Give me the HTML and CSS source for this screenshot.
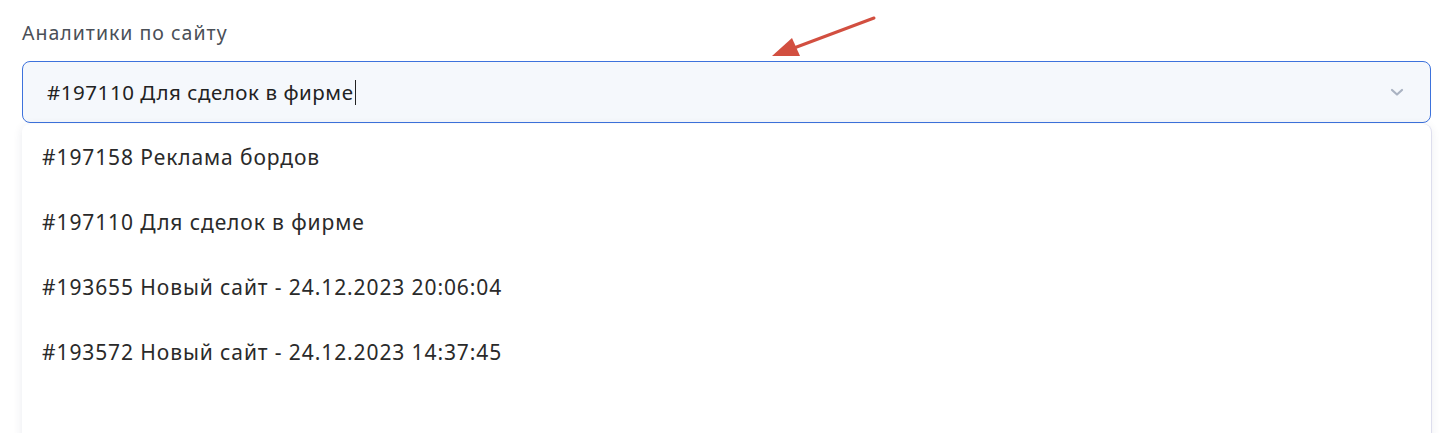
FILE: index.html
```html
<!DOCTYPE html>
<html lang="ru">
<head>
<meta charset="utf-8">
<link rel="stylesheet" href="styles.css">
</head>
<body>
<div class="field">
  <label class="label">Аналитики по сайту</label>
  <div class="select">
    <span class="value">#197110 Для сделок в фирме<span class="caret"></span></span>
    <svg class="chev" width="14" height="9" viewBox="0 0 14 9"><path d="M2 2 L7 6.5 L12 2" fill="none" stroke="#aab3c2" stroke-width="2.2" stroke-linecap="round" stroke-linejoin="round"/></svg>
  </div>
  <ul class="menu">
    <li class="item">#197158 Реклама бордов</li>
    <li class="item">#197110 Для сделок в фирме</li>
    <li class="item">#193655 Новый сайт - 24.12.2023 20:06:04</li>
    <li class="item">#193572 Новый сайт - 24.12.2023 14:37:45</li>
  </ul>
  <svg class="arrow" width="120" height="50" viewBox="0 0 120 50"><line x1="110" y1="6" x2="30" y2="36" stroke="#d24f40" stroke-width="3" stroke-linecap="round"/><polygon points="8,44 28,26 36,44" fill="#d24f40"/></svg>
</div>
</body>
</html>
```
FILE: styles.css
```css
html, body { margin: 0; padding: 0; background: #fff; }
body { font-family: "Noto Sans", "Open Sans", sans-serif; color: #222; }
.field { position: relative; padding: 19px 10px 0 22px; }
.label { display: block; font-size: 19.5px; letter-spacing: 1px; color: #4a4f57; line-height: 28px; margin-bottom: 14px; }
.select {
  height: 62px; box-sizing: border-box; border: 1px solid #3d72dc; border-radius: 8px;
  background: #f5f8fc; display: flex; align-items: center; justify-content: space-between;
  padding: 0 26px 0 24px;
}
.value { font-size: 20.5px; letter-spacing: 0.55px; color: #222; display: flex; align-items: center; }
.caret { display: inline-block; width: 1px; height: 25px; background: #222; margin-left: 1px; }
.menu {
  list-style: none; margin: 1px 0 0 0; padding: 0 0 40px 0; background: #fff;
  border-radius: 8px; box-shadow: 0 2px 10px rgba(40, 50, 90, 0.10), 1px 0 0 #e6e6f4;
  min-height: 320px; box-sizing: border-box;
}
.item { font-size: 21px; letter-spacing: 0.9px; color: #2a2a2a; height: 65px; display: flex; align-items: center; padding-left: 20px; }
.arrow { position: absolute; left: 764px; top: 12px; }
```
